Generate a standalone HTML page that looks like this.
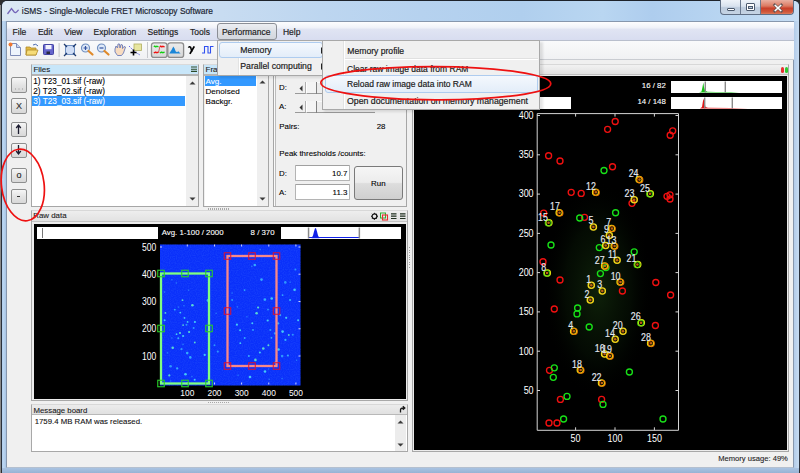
<!DOCTYPE html>
<html><head><meta charset="utf-8">
<style>
*{box-sizing:border-box}
html,body{margin:0;padding:0;width:800px;height:473px;overflow:hidden;background:#2e2e2e}
body{position:relative;font-family:"Liberation Sans",sans-serif;font-size:9px;color:#000}
.a{position:absolute}
.t{position:absolute;white-space:nowrap;line-height:1;-webkit-text-stroke:0.1px currentColor}
.m{-webkit-text-stroke:0.18px currentColor}
.btn{position:absolute;border:1px solid #8e8f8f;border-radius:2px;background:linear-gradient(#f6f6f6,#e4e4e4 50%,#d8d8d8);text-align:center;color:#333}
svg{position:absolute;overflow:visible}
</style></head><body>
<div class="a" style="left:0px;top:5px;width:1px;height:468px;background:#8a8a8a"></div>
<div class="a" style="left:1px;top:0px;width:799px;height:474px;border:1px solid #2a313c;border-top-color:#1e232b;border-radius:6px 6px 6px 6px;background:linear-gradient(180deg,rgba(255,255,255,0) 0,rgba(255,255,255,0) 100%),linear-gradient(90deg,#a9c4e4 0,#b4cdea 3px,#bcd3ee 100%)"></div>
<div class="a" style="left:2px;top:1px;width:797px;height:20px;border-radius:5px 5px 0 0;background:linear-gradient(90deg,#dce8f4 0,#d3e3f3 120px,#c8dcf1 220px,#bdd6f0 320px,#b6d2ef 420px,#b0cfee 520px,#b9d6f1 600px,#aecdee 650px,#b8d5f1 720px,#c8def4 800px)"></div>
<div class="a" style="left:2px;top:468px;width:797px;height:5px;background:linear-gradient(#a9c3e2,#98b3d4)"></div>
<div class="a" style="left:2px;top:21px;width:4px;height:447px;background:linear-gradient(90deg,#b0cdec,#bcd6f0 40%,#a8c4e4)"></div>
<div class="a" style="left:794px;top:21px;width:5px;height:447px;background:linear-gradient(90deg,#b2cbe8,#c7dcf2)"></div>
<div class="a" style="left:6px;top:21px;width:788px;height:447px;background:#f0f0f0;border:1px solid #8797ad;border-bottom-color:#b4c0d0"></div>
<svg style="left:7px;top:7px" width="12" height="8" viewBox="0 0 12 8"><path d="M0.8 6.5 L4.5 1.5 L7.2 5 Q8.8 6.8 11.3 3.2" stroke="#7565b8" stroke-width="1.3" fill="none" stroke-linecap="round"/></svg>
<div class="t m" style="top:7.09px;font-size:8.4px;color:#1b2533;left:21.80px;">iSMS - Single-Molecule FRET Microscopy Software</div>
<div class="a" style="left:720px;top:0px;width:74px;height:15px;border:1px solid #5f6e84;border-top:none;border-radius:0 0 4px 4px;overflow:hidden;background:linear-gradient(#eef3f9,#d8e2ee 45%,#bccbdd 55%,#c6d4e4)">
 <div class="a" style="left:19px;top:0;width:1px;height:15px;background:#6b7a90"></div>
 <div class="a" style="left:39px;top:0;width:1px;height:15px;background:#6b7a90"></div>
 <div class="a" style="left:40px;top:0;width:34px;height:15px;background:linear-gradient(#e9b0a2,#dc7a62 40%,#c8402a 55%,#d0583c 80%,#e08a6a)"></div>
 <div class="a" style="left:6px;top:8px;width:8px;height:3px;background:#fff;border:1px solid #4c5a6e;border-radius:1px"></div>
 <div class="a" style="left:25px;top:3px;width:9px;height:8px;background:#fff;border:1px solid #4c5a6e;border-radius:1px"></div>
 <div class="a" style="left:27px;top:6px;width:5px;height:3px;background:#bcc9da;border:1px solid #4c5a6e"></div>
 <svg style="left:52px;top:4px" width="10" height="8" viewBox="0 0 10 8"><path d="M1.8 1 L8.2 7 M8.2 1 L1.8 7" stroke="#6a5a5a" stroke-width="3" stroke-linecap="square"/><path d="M1.8 1 L8.2 7 M8.2 1 L1.8 7" stroke="#fff" stroke-width="1.7"/></svg>
</div>
<div class="a" style="left:7px;top:22px;width:787px;height:18px;background:linear-gradient(#fdfdfe 0,#f1f3f9 30%,#e0e4f3 42%,#d8ddf0 100%)"></div>
<div class="a" style="left:7px;top:40px;width:787px;height:1px;background:#b9bfcd"></div>
<div class="a" style="left:217px;top:23px;width:60px;height:17px;border:1px solid #8b8e95;border-radius:3px;background:linear-gradient(#eceef2,#dde0e6 50%,#d3d7de)"></div>
<div class="t m" style="top:27.80px;font-size:8.5px;color:#1e1e1e;left:12.60px;">File</div>
<div class="t m" style="top:27.80px;font-size:8.5px;color:#1e1e1e;left:37.90px;">Edit</div>
<div class="t m" style="top:27.80px;font-size:8.5px;color:#1e1e1e;left:64.20px;">View</div>
<div class="t m" style="top:27.80px;font-size:8.5px;color:#1e1e1e;left:93.60px;">Exploration</div>
<div class="t m" style="top:27.80px;font-size:8.5px;color:#1e1e1e;left:147.60px;">Settings</div>
<div class="t m" style="top:27.80px;font-size:8.5px;color:#1e1e1e;left:190.10px;">Tools</div>
<div class="t m" style="top:27.80px;font-size:8.5px;color:#1e1e1e;left:221.90px;">Performance</div>
<div class="t m" style="top:27.80px;font-size:8.5px;color:#1e1e1e;left:282.90px;">Help</div>
<div class="a" style="left:7px;top:41px;width:787px;height:18px;background:linear-gradient(#f9fafb,#f0f1f3)"></div>
<div class="a" style="left:7px;top:59px;width:787px;height:1px;background:#c9ccd1"></div>
<svg style="left:8px;top:42px" width="210" height="16" viewBox="0 0 210 16">
 <defs><linearGradient id="pbg" x1="0" y1="0" x2="0" y2="1"><stop offset="0" stop-color="#ececec"/><stop offset="1" stop-color="#d6d6d6"/></linearGradient></defs>
 <path d="M2.5 1.5 H8.5 L12.5 5.5 V13.5 H2.5 Z" fill="#eef4fc" stroke="#7e8cb8" stroke-width="1"/>
 <path d="M8.5 1.5 V5.5 H12.5" fill="#c8d2ee" stroke="#7e8cb8" stroke-width="1"/>
 <circle cx="2.5" cy="2.5" r="2" fill="#f07830"/>
 <path d="M18 5 H22 L23 6 H28 V13 H18 Z" fill="#e2b840" stroke="#b08a28" stroke-width="0.8"/>
 <path d="M19 8 H30 L28 13 H18 Z" fill="#f6dc78" stroke="#b08a28" stroke-width="0.8"/>
 <path d="M25 3 Q28 1 30 4" stroke="#4a6ab0" stroke-width="1" fill="none"/>
 <rect x="35.5" y="2.5" width="10" height="10" rx="0.8" fill="#6464cc" stroke="#4444a4"/>
 <rect x="37.5" y="3" width="6" height="4.2" fill="#f2f2fc"/>
 <rect x="38.5" y="9.5" width="3.5" height="2.5" fill="#2a2a40"/>
 <rect x="50.6" y="1" width="1" height="14" fill="#c0c2c6"/>
 <rect x="57.5" y="3.5" width="9" height="9" fill="#d0def6" stroke="#7090c0"/>
 <path d="M56 2 L59 5 M68 2 L65 5 M56 14 L59 11 M68 14 L65 11" stroke="#203c70" stroke-width="1.3"/>
 <circle cx="77.5" cy="6" r="4" fill="#dfeaf8" stroke="#6f8fc0" stroke-width="1.2"/>
 <path d="M75.5 6 H79.5 M77.5 4 V8" stroke="#3050a0" stroke-width="1.2"/>
 <path d="M80.5 9 L84.5 12.5" stroke="#e08a2a" stroke-width="2.2" stroke-linecap="round"/>
 <circle cx="93.5" cy="6" r="4" fill="#dfeaf8" stroke="#6f8fc0" stroke-width="1.2"/>
 <path d="M91.5 6 H95.5" stroke="#3050a0" stroke-width="1.2"/>
 <path d="M96.5 9 L100.5 12.5" stroke="#e08a2a" stroke-width="2.2" stroke-linecap="round"/>
 <path d="M107 7 L108 4 L109.5 6 L110 2 L111.5 2 L112 6 L113 2.5 L114.5 3 L114.5 6.5 L116 4.5 L117.5 5 L115.5 11 L113.5 13.5 H109.5 L107 10 Z" fill="#f8dcc0" stroke="#6a7ab8" stroke-width="0.9"/>
 <rect x="126" y="2" width="7.5" height="6.5" fill="#e8e6a0" stroke="#b0ae60" stroke-width="0.8"/>
 <path d="M121 4 L127 10 L132 13" stroke="#5a5ae0" stroke-width="0.9" stroke-dasharray="1.5 1" fill="none"/>
 <path d="M125.5 7.5 V13.5 M122.5 10.5 H128.5" stroke="#000" stroke-width="1.6"/>
 <rect x="139" y="0" width="1" height="16" fill="#c6c8cc"/>
 <rect x="143.5" y="0.8" width="15.5" height="14.6" rx="2.5" fill="url(#pbg)" stroke="#8c8c8c" stroke-width="1.3"/>
 <path d="M145.8 4.8 L146.8 4.1 L147.8 5 L148.8 4.2 L150.5 4.8" stroke="#10d010" stroke-width="1.3" fill="none"/>
 <path d="M151.8 4.8 L152.8 4.1 L153.8 5 L154.8 4.3 L156.6 4.8" stroke="#f01010" stroke-width="1.3" fill="none"/>
 <path d="M145.8 10.2 L146.8 10.8 L147.8 10 L148.8 10.7 L150.6 10.2" stroke="#f01010" stroke-width="1.3" fill="none"/>
 <path d="M151.8 10.2 L152.8 10.8 L153.8 10 L154.8 10.7 L156.6 10.2" stroke="#10d010" stroke-width="1.3" fill="none"/>
 <path d="M150.6 10.2 L151.8 4.8" stroke="#d02020" stroke-width="0.7" fill="none"/>
 <rect x="159.8" y="0.8" width="15.8" height="14.6" rx="2.5" fill="url(#pbg)" stroke="#8c8c8c" stroke-width="1.3"/>
 <path d="M161.2 11.6 L163.5 8 L165.3 4.6 L166.6 6.5 L167.6 9.3 L169 10.2 L170.3 9.2 L171.5 10.6 L172.6 11.6 Z" fill="#1a86d8"/>
 <path d="M180.4 5.6 Q181.4 3.9 182.6 5.2 L183.9 9.6" stroke="#000" stroke-width="1.5" fill="none"/>
 <path d="M186.3 4.4 L181.9 11.9" stroke="#000" stroke-width="1.8" fill="none"/>
 <path d="M194 11 H196.5 V4.5 H200 V11 H202.5 V4.5 H205.5" stroke="#3050f0" stroke-width="1.1" fill="none"/>
</svg>
<div class="btn" style="left:11px;top:77px;width:16px;height:16px"></div>
<svg style="left:14px;top:88px" width="10" height="2"><path d="M1 1 H2 M4.5 1 H5.5 M8 1 H9" stroke="#999" stroke-width="1"/></svg>
<div class="btn" style="left:11px;top:98px;width:16px;height:16px"></div>
<div class="t" style="top:102.38px;font-size:9px;color:#333;left:-131.00px;width:300px;text-align:center;">X</div>
<div class="btn" style="left:11px;top:122px;width:16px;height:15px"></div>
<svg style="left:15px;top:124px" width="7" height="10"><path d="M3.5 1.5 V10 M1.2 4 L3.5 1 L5.8 4" stroke="#1c1c30" stroke-width="1.3" fill="none"/></svg>
<div class="btn" style="left:11px;top:143px;width:16px;height:15px"></div>
<svg style="left:15px;top:145px" width="7" height="10"><path d="M3.5 0 V8.5 M1.2 6 L3.5 9 L5.8 6" stroke="#1c1c30" stroke-width="1.3" fill="none"/></svg>
<div class="btn" style="left:11px;top:168px;width:16px;height:15px"></div>
<div class="t" style="top:170.88px;font-size:9px;color:#222;left:-131.00px;width:300px;text-align:center;">o</div>
<div class="btn" style="left:11px;top:189px;width:16px;height:15px"></div>
<div class="a" style="left:17px;top:196px;width:3px;height:1px;background:#333"></div>
<div class="a" style="left:31px;top:64px;width:167.5px;height:142.5px;border:1px solid #a6a6a6;border-top-color:#dadada;border-bottom-width:1.5px;border-right-width:1.3px;background:#f0f0f0"></div>
<div class="a" style="left:32px;top:65px;width:166px;height:9px;background:#c8e6f9"></div>
<div class="a" style="left:32px;top:74px;width:166px;height:2px;background:#b4b4b4"></div>
<div class="t" style="top:65.63px;font-size:8px;color:#1a1a1a;left:33.40px;">Files</div>
<svg style="left:191px;top:66px" width="6" height="7"><path d="M0 1 H6 M0 3.2 H6 M0 5.4 H6" stroke="#2a4a2a" stroke-width="1.1"/></svg>
<div class="a" style="left:32px;top:76px;width:154px;height:130px;background:#fff"></div>
<div class="a" style="left:186px;top:76px;width:12px;height:130px;background:#efefef"></div>
<svg style="left:188.5px;top:80.5px" width="7" height="4"><path d="M0.5 3.5 L3.5 0.5 L6.5 3.5 Z" fill="#3a3a3a"/></svg>
<svg style="left:188.5px;top:197px" width="7" height="4"><path d="M0.5 0.5 L3.5 3.5 L6.5 0.5 Z" fill="#3a3a3a"/></svg>
<div class="a" style="left:32px;top:96px;width:153px;height:10px;background:#3399ff"></div>
<div class="t" style="top:78.32px;font-size:8.25px;left:33.25px;">1) T23_01.sif (-raw)</div>
<div class="t" style="top:88.32px;font-size:8.25px;left:33.25px;">2) T23_02.sif (-raw)</div>
<div class="t" style="top:98.22px;font-size:8.25px;color:#fff;left:33.25px;">3) T23_03.sif (-raw)</div>
<div class="a" style="left:203px;top:64px;width:66px;height:142.5px;border:1px solid #a6a6a6;border-top-color:#dadada;border-bottom-width:1.5px;background:#f0f0f0"></div>
<div class="a" style="left:204px;top:65px;width:64px;height:9px;background:#c8e6f9"></div>
<div class="a" style="left:204px;top:74px;width:64px;height:2px;background:#b4b4b4"></div>
<div class="t" style="top:65.63px;font-size:8px;color:#1a1a1a;left:205.50px;">Frames</div>
<div class="a" style="left:205px;top:76px;width:52px;height:130px;background:#fff"></div>
<div class="a" style="left:256.5px;top:76px;width:11.5px;height:129px;background:#efefef"></div>
<svg style="left:259px;top:80px" width="7" height="4"><path d="M0.5 3.5 L3.5 0.5 L6.5 3.5 Z" fill="#3a3a3a"/></svg>
<svg style="left:259px;top:197px" width="7" height="4"><path d="M0.5 0.5 L3.5 3.5 L6.5 0.5 Z" fill="#3a3a3a"/></svg>
<div class="a" style="left:205px;top:76px;width:51px;height:10px;background:#3399ff"></div>
<div class="t" style="top:78.34px;font-size:8.1px;color:#fff;left:205.50px;">Avg.</div>
<div class="t" style="top:88.44px;font-size:8.1px;left:205.50px;">Denoised</div>
<div class="t" style="top:98.44px;font-size:8.1px;left:205.50px;">Backgr.</div>
<div class="a" style="left:208px;top:208px;width:22px;height:2px;background:repeating-linear-gradient(90deg,#a8a8a8 0 1px,transparent 1px 2px)"></div>
<div class="a" style="left:273.3px;top:64px;width:133.7px;height:142.5px;border:1px solid #a6a6a6;border-top-color:#dadada;border-bottom-width:1.5px;background:#f0f0f0;box-shadow:inset 1px 0 0 #fafafa, inset 2px 0 0 #bdbdbd"></div>
<div class="a" style="left:275px;top:65px;width:131px;height:9px;background:#c8e6f9"></div>
<div class="t" style="top:83.71px;font-size:7.9px;left:279.10px;">D:</div>
<div class="t" style="top:102.81px;font-size:7.9px;left:279.10px;">A:</div>
<div class="a" style="left:295px;top:82px;width:80px;height:12px;background:#ececec;border-bottom:1px solid #9a9a9a;border-top:1px solid #fafafa"></div>
<div class="a" style="left:295px;top:82px;width:11px;height:12px;background:#f0f0f0;border-right:1px solid #b0b0b0;border-bottom:1px solid #9a9a9a"></div>
<svg style="left:299px;top:85px" width="4" height="7"><path d="M3.5 0.5 L0.5 3.5 L3.5 6.5 Z" fill="#333"/></svg>
<div class="a" style="left:306px;top:82px;width:11px;height:12px;background:#f4f4f4;border-left:1px solid #fff;border-right:1px solid #808080;border-bottom:1px solid #9a9a9a"></div>
<div class="a" style="left:316px;top:82px;width:1px;height:12px;background:#808080"></div>
<div class="a" style="left:295px;top:101px;width:80px;height:12px;background:#ececec;border-bottom:1px solid #9a9a9a;border-top:1px solid #fafafa"></div>
<div class="a" style="left:295px;top:101px;width:11px;height:12px;background:#f0f0f0;border-right:1px solid #b0b0b0;border-bottom:1px solid #9a9a9a"></div>
<svg style="left:299px;top:104px" width="4" height="7"><path d="M3.5 0.5 L0.5 3.5 L3.5 6.5 Z" fill="#333"/></svg>
<div class="a" style="left:306px;top:101px;width:11px;height:12px;background:#f4f4f4;border-left:1px solid #fff;border-right:1px solid #808080;border-bottom:1px solid #9a9a9a"></div>
<div class="a" style="left:316px;top:101px;width:1px;height:12px;background:#808080"></div>
<div class="t" style="top:122.56px;font-size:7.9px;left:279.25px;">Pairs:</div>
<div class="t" style="top:122.56px;font-size:7.9px;left:85.50px;width:300px;text-align:right;">28</div>
<div class="t" style="top:149.56px;font-size:7.9px;left:279.25px;">Peak thresholds /counts:</div>
<div class="t" style="top:169.56px;font-size:7.9px;left:279.10px;">D:</div>
<div class="t" style="top:188.71px;font-size:7.9px;left:279.10px;">A:</div>
<div class="a" style="left:295px;top:165px;width:55px;height:16px;background:#fff;border:1px solid #b4b4b4;border-top-color:#a0a0a0;border-radius:1px"></div>
<div class="a" style="left:295px;top:184px;width:55px;height:16px;background:#fff;border:1px solid #b4b4b4;border-top-color:#a0a0a0;border-radius:1px"></div>
<div class="t" style="top:169.56px;font-size:7.9px;left:47.40px;width:300px;text-align:right;">10.7</div>
<div class="t" style="top:188.71px;font-size:7.9px;left:47.40px;width:300px;text-align:right;">11.3</div>
<div class="a" style="left:354px;top:166px;width:49px;height:34px;border:1px solid #7a7a7a;border-radius:3px;background:linear-gradient(#f6f6f6 0,#ececec 48%,#dddddd 52%,#cfcfcf)"></div>
<div class="t" style="top:180.31px;font-size:7.9px;left:228.30px;width:300px;text-align:center;">Run</div>
<div class="a" style="left:31px;top:210px;width:377px;height:191px;border:1px solid #a8a8a8;border-top-color:#d8d8d8;background:#ececec"></div>
<div class="a" style="left:32px;top:211px;width:375px;height:10px;background:linear-gradient(#eeeeee,#e2e2e2)"></div>
<div class="a" style="left:32px;top:221px;width:375px;height:1px;background:#c2c2c2"></div>
<div class="t" style="top:211.91px;font-size:7.9px;color:#1a1a1a;left:33.25px;">Raw data</div>
<svg style="left:370px;top:212px" width="37" height="9" viewBox="0 0 37 9">
 <circle cx="4.5" cy="4.3" r="2.4" fill="none" stroke="#111" stroke-width="1.2"/><path d="M4.5 0.8 V1.9 M4.5 6.7 V7.8 M1 4.3 H2.1 M6.9 4.3 H8 M2 1.8 L2.8 2.6 M7 1.8 L6.2 2.6 M2 6.8 L2.8 6 M7 6.8 L6.2 6" stroke="#111" stroke-width="0.9"/>
 <rect x="10.5" y="1" width="5" height="5" fill="none" stroke="#30b030" stroke-width="1"/>
 <rect x="12.5" y="3" width="5" height="5" fill="none" stroke="#e83030" stroke-width="1.1"/>
 <path d="M21 1.9 H26.5 M21 4.2 H26.5 M21 6.5 H26.5" stroke="#1e2e1e" stroke-width="1.2"/>
 <path d="M30 1.9 H35.5 M30 4.2 H35.5 M30 6.5 H35.5" stroke="#1e2e1e" stroke-width="1.2"/>
</svg>
<div class="a" style="left:34px;top:224px;width:372px;height:175px;background:#000"></div>
<div class="a" style="left:37px;top:227px;width:121px;height:12px;background:#fff"></div>
<div class="a" style="left:42px;top:228px;width:1px;height:10px;background:#777"></div>
<div class="t" style="top:228.75px;font-size:7.85px;color:#fff;left:161.75px;">Avg. 1-100 / 2000</div>
<div class="t" style="top:228.75px;font-size:7.85px;color:#fff;left:-25.40px;width:300px;text-align:right;">8 / 370</div>
<svg style="left:281px;top:227px" width="120" height="12" viewBox="0 0 120 12">
 <rect x="0" y="0" width="120" height="12" fill="#fff"/>
 <path d="M28 10.5 H78" stroke="#1020e8" stroke-width="1.2"/>
 <path d="M30.5 11.2 L32 8.5 L33 4.5 L34 1.2 L35 1.2 L36 4.5 L37 8.5 L38.5 11.2 Z" fill="#1020e8"/>
 <rect x="26.8" y="0.5" width="1.5" height="11" fill="#8a8a8a"/>
 <rect x="77.6" y="0.5" width="1.5" height="11" fill="#8a8a8a"/>
</svg>
<svg style="left:0;top:0" width="800" height="473" viewBox="0 0 800 473"><defs><filter id="nz" x="0" y="0" width="100%" height="100%"><feTurbulence type="fractalNoise" baseFrequency="0.85" numOctaves="1" seed="3"/><feColorMatrix values="0 0 0 0 0.1  0 0 0 0 0.3  0 0 0 0 1  0 0 0 1.2 -0.45"/></filter><filter id="bl" x="-100%" y="-100%" width="300%" height="300%"><feGaussianBlur stdDeviation="0.7"/></filter></defs>
<rect x="160" y="244.5" width="140.5" height="141" fill="#0a30fa"/>
<rect x="160" y="244.5" width="140.5" height="141" filter="url(#nz)" opacity="0.3"/>
<circle cx="174.8" cy="309.7" r="0.9" fill="#38b8ff" filter="url(#bl)" opacity="0.9"/>
<circle cx="180.3" cy="312.6" r="0.9" fill="#48d8f8" filter="url(#bl)" opacity="0.9"/>
<circle cx="184.5" cy="317.9" r="0.9" fill="#48d8f8" filter="url(#bl)" opacity="0.9"/>
<circle cx="187.6" cy="321.9" r="0.9" fill="#48d8f8" filter="url(#bl)" opacity="0.9"/>
<circle cx="183.1" cy="325.1" r="0.9" fill="#60e8d0" filter="url(#bl)" opacity="0.9"/>
<circle cx="186.5" cy="324.7" r="1.0" fill="#30a0ff" filter="url(#bl)" opacity="0.9"/>
<circle cx="194.9" cy="322.0" r="1.1" fill="#48d8f8" filter="url(#bl)" opacity="0.9"/>
<circle cx="193.6" cy="328.1" r="1.0" fill="#30a0ff" filter="url(#bl)" opacity="0.9"/>
<circle cx="176.6" cy="334.2" r="0.9" fill="#48d8f8" filter="url(#bl)" opacity="0.9"/>
<circle cx="180.0" cy="333.0" r="1.1" fill="#60e8d0" filter="url(#bl)" opacity="0.9"/>
<circle cx="183.1" cy="336.0" r="1.1" fill="#48d8f8" filter="url(#bl)" opacity="0.9"/>
<circle cx="178.3" cy="338.2" r="1.0" fill="#38b8ff" filter="url(#bl)" opacity="0.9"/>
<circle cx="189.1" cy="332.0" r="1.1" fill="#60e8d0" filter="url(#bl)" opacity="0.9"/>
<circle cx="194.8" cy="342.5" r="0.9" fill="#60e8d0" filter="url(#bl)" opacity="0.9"/>
<circle cx="172.7" cy="347.8" r="1.3" fill="#60e8d0" filter="url(#bl)" opacity="0.9"/>
<circle cx="181.5" cy="349.2" r="1.1" fill="#30a0ff" filter="url(#bl)" opacity="0.9"/>
<circle cx="187.2" cy="353.1" r="1.3" fill="#38b8ff" filter="url(#bl)" opacity="0.9"/>
<circle cx="190.3" cy="357.4" r="1.3" fill="#38b8ff" filter="url(#bl)" opacity="0.9"/>
<circle cx="170.6" cy="366.2" r="1.3" fill="#30a0ff" filter="url(#bl)" opacity="0.9"/>
<circle cx="177.2" cy="368.4" r="1.1" fill="#38b8ff" filter="url(#bl)" opacity="0.9"/>
<circle cx="165.4" cy="312.9" r="0.9" fill="#60e8d0" filter="url(#bl)" opacity="0.9"/>
<circle cx="164.6" cy="320.3" r="1.0" fill="#48d8f8" filter="url(#bl)" opacity="0.9"/>
<circle cx="207.9" cy="300.4" r="1.3" fill="#38b8ff" filter="url(#bl)" opacity="0.9"/>
<circle cx="204.7" cy="354.9" r="1.1" fill="#48d8f8" filter="url(#bl)" opacity="0.9"/>
<circle cx="169.3" cy="375.4" r="1.1" fill="#60e8d0" filter="url(#bl)" opacity="0.9"/>
<circle cx="185.5" cy="374.2" r="1.3" fill="#48d8f8" filter="url(#bl)" opacity="0.9"/>
<circle cx="194.7" cy="379.7" r="1.0" fill="#48d8f8" filter="url(#bl)" opacity="0.9"/>
<circle cx="214.5" cy="345.3" r="1.0" fill="#30a0ff" filter="url(#bl)" opacity="0.9"/>
<circle cx="217.8" cy="351.6" r="1.1" fill="#30a0ff" filter="url(#bl)" opacity="0.9"/>
<circle cx="182.5" cy="300.2" r="0.9" fill="#60e8d0" filter="url(#bl)" opacity="0.9"/>
<circle cx="192.4" cy="305.3" r="1.3" fill="#60e8d0" filter="url(#bl)" opacity="0.9"/>
<circle cx="264.9" cy="299.6" r="1.3" fill="#38b8ff" filter="url(#bl)" opacity="0.9"/>
<circle cx="271.7" cy="298.5" r="1.3" fill="#48d8f8" filter="url(#bl)" opacity="0.9"/>
<circle cx="282.6" cy="295.1" r="0.9" fill="#38b8ff" filter="url(#bl)" opacity="0.9"/>
<circle cx="290.1" cy="300.0" r="1.1" fill="#38b8ff" filter="url(#bl)" opacity="0.9"/>
<circle cx="294.6" cy="289.7" r="1.3" fill="#48d8f8" filter="url(#bl)" opacity="0.9"/>
<circle cx="258.1" cy="307.5" r="1.1" fill="#60e8d0" filter="url(#bl)" opacity="0.9"/>
<circle cx="256.6" cy="313.3" r="1.3" fill="#60e8d0" filter="url(#bl)" opacity="0.9"/>
<circle cx="268.0" cy="309.6" r="0.9" fill="#30a0ff" filter="url(#bl)" opacity="0.9"/>
<circle cx="280.2" cy="315.0" r="1.0" fill="#38b8ff" filter="url(#bl)" opacity="0.9"/>
<circle cx="267.7" cy="320.5" r="1.1" fill="#48d8f8" filter="url(#bl)" opacity="0.9"/>
<circle cx="278.2" cy="323.4" r="1.1" fill="#38b8ff" filter="url(#bl)" opacity="0.9"/>
<circle cx="286.2" cy="317.8" r="1.1" fill="#48d8f8" filter="url(#bl)" opacity="0.9"/>
<circle cx="236.9" cy="324.7" r="1.1" fill="#48d8f8" filter="url(#bl)" opacity="0.9"/>
<circle cx="240.1" cy="330.3" r="1.0" fill="#48d8f8" filter="url(#bl)" opacity="0.9"/>
<circle cx="252.3" cy="323.2" r="1.0" fill="#48d8f8" filter="url(#bl)" opacity="0.9"/>
<circle cx="253.0" cy="329.9" r="0.9" fill="#38b8ff" filter="url(#bl)" opacity="0.9"/>
<circle cx="270.3" cy="330.0" r="1.0" fill="#30a0ff" filter="url(#bl)" opacity="0.9"/>
<circle cx="274.9" cy="333.4" r="1.1" fill="#30a0ff" filter="url(#bl)" opacity="0.9"/>
<circle cx="282.6" cy="331.6" r="1.3" fill="#48d8f8" filter="url(#bl)" opacity="0.9"/>
<circle cx="288.8" cy="335.0" r="0.9" fill="#60e8d0" filter="url(#bl)" opacity="0.9"/>
<circle cx="271.4" cy="337.8" r="0.9" fill="#38b8ff" filter="url(#bl)" opacity="0.9"/>
<circle cx="268.4" cy="345.3" r="1.0" fill="#60e8d0" filter="url(#bl)" opacity="0.9"/>
<circle cx="285.4" cy="339.9" r="1.1" fill="#38b8ff" filter="url(#bl)" opacity="0.9"/>
<circle cx="263.3" cy="348.5" r="1.3" fill="#60e8d0" filter="url(#bl)" opacity="0.9"/>
<circle cx="259.9" cy="352.4" r="1.0" fill="#48d8f8" filter="url(#bl)" opacity="0.9"/>
<circle cx="278.5" cy="349.5" r="1.3" fill="#48d8f8" filter="url(#bl)" opacity="0.9"/>
<circle cx="282.1" cy="356.1" r="1.3" fill="#30a0ff" filter="url(#bl)" opacity="0.9"/>
<circle cx="244.7" cy="338.0" r="0.9" fill="#38b8ff" filter="url(#bl)" opacity="0.9"/>
<circle cx="240.3" cy="343.2" r="0.9" fill="#48d8f8" filter="url(#bl)" opacity="0.9"/>
<circle cx="287.9" cy="355.4" r="1.0" fill="#38b8ff" filter="url(#bl)" opacity="0.9"/>
<circle cx="292.8" cy="334.8" r="1.0" fill="#30a0ff" filter="url(#bl)" opacity="0.9"/>
<circle cx="248.8" cy="355.9" r="1.0" fill="#38b8ff" filter="url(#bl)" opacity="0.9"/>
<circle cx="255.4" cy="359.9" r="1.3" fill="#60e8d0" filter="url(#bl)" opacity="0.9"/>
<circle cx="275.3" cy="362.4" r="1.0" fill="#48d8f8" filter="url(#bl)" opacity="0.9"/>
<circle cx="265.0" cy="371.5" r="1.3" fill="#48d8f8" filter="url(#bl)" opacity="0.9"/>
<circle cx="298.1" cy="320.3" r="1.0" fill="#48d8f8" filter="url(#bl)" opacity="0.9"/>
<circle cx="244.6" cy="290.1" r="0.9" fill="#38b8ff" filter="url(#bl)" opacity="0.9"/>
<circle cx="254.8" cy="265.0" r="1.3" fill="#38b8ff" filter="url(#bl)" opacity="0.9"/>
<circle cx="295.4" cy="269.6" r="1.0" fill="#30a0ff" filter="url(#bl)" opacity="0.9"/>
<circle cx="261.5" cy="279.6" r="1.3" fill="#38b8ff" filter="url(#bl)" opacity="0.9"/>
<circle cx="285.3" cy="282.4" r="1.3" fill="#30a0ff" filter="url(#bl)" opacity="0.9"/>
<circle cx="232.1" cy="300.0" r="1.0" fill="#30a0ff" filter="url(#bl)" opacity="0.9"/>
<circle cx="250.0" cy="377.0" r="1.3" fill="#48d8f8" filter="url(#bl)" opacity="0.9"/>
<circle cx="257.1" cy="366.2" r="0.8" fill="#3090ff" filter="url(#bl)" opacity="0.7"/>
<circle cx="290.1" cy="282.3" r="0.8" fill="#3090ff" filter="url(#bl)" opacity="0.7"/>
<circle cx="238.1" cy="375.3" r="0.8" fill="#3090ff" filter="url(#bl)" opacity="0.7"/>
<circle cx="276.2" cy="265.7" r="0.8" fill="#3090ff" filter="url(#bl)" opacity="0.7"/>
<circle cx="178.5" cy="307.1" r="0.8" fill="#3090ff" filter="url(#bl)" opacity="0.7"/>
<circle cx="171.9" cy="279.7" r="0.8" fill="#3090ff" filter="url(#bl)" opacity="0.7"/>
<circle cx="171.9" cy="338.0" r="0.8" fill="#3090ff" filter="url(#bl)" opacity="0.7"/>
<circle cx="268.6" cy="369.0" r="0.8" fill="#3090ff" filter="url(#bl)" opacity="0.7"/>
<circle cx="183.0" cy="344.4" r="0.8" fill="#3090ff" filter="url(#bl)" opacity="0.7"/>
<circle cx="251.8" cy="266.4" r="0.8" fill="#3090ff" filter="url(#bl)" opacity="0.7"/>
<circle cx="282.1" cy="378.6" r="0.8" fill="#3090ff" filter="url(#bl)" opacity="0.7"/>
<circle cx="191.9" cy="376.5" r="0.8" fill="#3090ff" filter="url(#bl)" opacity="0.7"/>
<circle cx="216.2" cy="313.3" r="0.8" fill="#3090ff" filter="url(#bl)" opacity="0.7"/>
<circle cx="296.6" cy="360.2" r="0.8" fill="#3090ff" filter="url(#bl)" opacity="0.7"/>
<circle cx="184.0" cy="305.7" r="0.8" fill="#3090ff" filter="url(#bl)" opacity="0.7"/>
<circle cx="232.1" cy="293.1" r="0.8" fill="#3090ff" filter="url(#bl)" opacity="0.7"/>
<circle cx="188.6" cy="290.3" r="0.8" fill="#3090ff" filter="url(#bl)" opacity="0.7"/>
<circle cx="260.2" cy="249.6" r="0.8" fill="#3090ff" filter="url(#bl)" opacity="0.7"/>
<circle cx="237.4" cy="306.9" r="0.8" fill="#3090ff" filter="url(#bl)" opacity="0.7"/>
<circle cx="164.5" cy="292.1" r="0.8" fill="#3090ff" filter="url(#bl)" opacity="0.7"/>
<circle cx="246.9" cy="316.7" r="0.8" fill="#3090ff" filter="url(#bl)" opacity="0.7"/>
<circle cx="170.7" cy="381.0" r="0.8" fill="#3090ff" filter="url(#bl)" opacity="0.7"/>
<circle cx="269.2" cy="379.2" r="0.8" fill="#3090ff" filter="url(#bl)" opacity="0.7"/>
<circle cx="176.3" cy="283.1" r="0.8" fill="#3090ff" filter="url(#bl)" opacity="0.7"/>
<circle cx="167.4" cy="352.9" r="0.8" fill="#3090ff" filter="url(#bl)" opacity="0.7"/>
<path d="M187.3 384.5 v-2 M187.3 244.5 v2 M160 356.0 h2 M300.5 356.0 h-2" stroke="#fff" stroke-width="0.8"/>
<text transform="translate(156.20 359.70) scale(0.84 1)" text-anchor="end" font-family="Liberation Sans" font-size="10.2" fill="#fff">100</text>
<text transform="translate(187.35 396.10) scale(0.85 1)" text-anchor="middle" font-family="Liberation Sans" font-size="9.9" fill="#fff">100</text>
<path d="M214.5 384.5 v-2 M214.5 244.5 v2 M160 328.8 h2 M300.5 328.8 h-2" stroke="#fff" stroke-width="0.8"/>
<text transform="translate(156.20 332.45) scale(0.84 1)" text-anchor="end" font-family="Liberation Sans" font-size="10.2" fill="#fff">200</text>
<text transform="translate(214.50 396.10) scale(0.85 1)" text-anchor="middle" font-family="Liberation Sans" font-size="9.9" fill="#fff">200</text>
<path d="M241.6 384.5 v-2 M241.6 244.5 v2 M160 301.5 h2 M300.5 301.5 h-2" stroke="#fff" stroke-width="0.8"/>
<text transform="translate(156.20 305.20) scale(0.84 1)" text-anchor="end" font-family="Liberation Sans" font-size="10.2" fill="#fff">300</text>
<text transform="translate(241.65 396.10) scale(0.85 1)" text-anchor="middle" font-family="Liberation Sans" font-size="9.9" fill="#fff">300</text>
<path d="M268.8 384.5 v-2 M268.8 244.5 v2 M160 274.2 h2 M300.5 274.2 h-2" stroke="#fff" stroke-width="0.8"/>
<text transform="translate(156.20 277.95) scale(0.84 1)" text-anchor="end" font-family="Liberation Sans" font-size="10.2" fill="#fff">400</text>
<text transform="translate(268.80 396.10) scale(0.85 1)" text-anchor="middle" font-family="Liberation Sans" font-size="9.9" fill="#fff">400</text>
<path d="M295.9 384.5 v-2 M295.9 244.5 v2 M160 247.0 h2 M300.5 247.0 h-2" stroke="#fff" stroke-width="0.8"/>
<text transform="translate(156.20 250.70) scale(0.84 1)" text-anchor="end" font-family="Liberation Sans" font-size="10.2" fill="#fff">500</text>
<text transform="translate(295.95 396.10) scale(0.85 1)" text-anchor="middle" font-family="Liberation Sans" font-size="9.9" fill="#fff">500</text>
<rect x="161" y="273.5" width="48" height="110" fill="none" stroke="#80ff80" stroke-width="2.3"/>
<rect x="227.5" y="256" width="49" height="110" fill="none" stroke="#f88888" stroke-width="2.3"/>
<rect x="157.75" y="270.25" width="6.5" height="6.5" fill="none" stroke="#28d028" stroke-width="1.1"/>
<rect x="181.75" y="270.25" width="6.5" height="6.5" fill="none" stroke="#28d028" stroke-width="1.1"/>
<rect x="205.75" y="270.25" width="6.5" height="6.5" fill="none" stroke="#28d028" stroke-width="1.1"/>
<rect x="157.75" y="325.25" width="6.5" height="6.5" fill="none" stroke="#28d028" stroke-width="1.1"/>
<rect x="205.75" y="325.25" width="6.5" height="6.5" fill="none" stroke="#28d028" stroke-width="1.1"/>
<rect x="157.75" y="380.25" width="6.5" height="6.5" fill="none" stroke="#28d028" stroke-width="1.1"/>
<rect x="181.75" y="380.25" width="6.5" height="6.5" fill="none" stroke="#28d028" stroke-width="1.1"/>
<rect x="205.75" y="380.25" width="6.5" height="6.5" fill="none" stroke="#28d028" stroke-width="1.1"/>
<rect x="224.25" y="252.75" width="6.5" height="6.5" fill="none" stroke="#e01030" stroke-width="1"/>
<rect x="248.75" y="252.75" width="6.5" height="6.5" fill="none" stroke="#e01030" stroke-width="1"/>
<rect x="273.25" y="252.75" width="6.5" height="6.5" fill="none" stroke="#e01030" stroke-width="1"/>
<rect x="224.25" y="307.75" width="6.5" height="6.5" fill="none" stroke="#e01030" stroke-width="1"/>
<rect x="273.25" y="307.75" width="6.5" height="6.5" fill="none" stroke="#e01030" stroke-width="1"/>
<rect x="224.25" y="362.75" width="6.5" height="6.5" fill="none" stroke="#e01030" stroke-width="1"/>
<rect x="248.75" y="362.75" width="6.5" height="6.5" fill="none" stroke="#e01030" stroke-width="1"/>
<rect x="273.25" y="362.75" width="6.5" height="6.5" fill="none" stroke="#e01030" stroke-width="1"/></svg>
<div class="a" style="left:31px;top:404px;width:377px;height:48px;border:1px solid #a8a8a8;border-top-color:#d8d8d8;background:#fff"></div>
<div class="a" style="left:32px;top:405px;width:375px;height:9px;background:linear-gradient(#ececec,#e0e0e0)"></div>
<div class="a" style="left:32px;top:414px;width:375px;height:1px;background:#b8b8b8"></div>
<div class="t" style="top:406.60px;font-size:7.8px;color:#1a1a1a;left:33.50px;">Message board</div>
<svg style="left:399px;top:406px" width="7" height="7"><path d="M1.5 6.5 V4 Q1.5 2 4 2 H5.5 M3.8 0.3 L5.8 2 L3.8 3.7" stroke="#1a1a1a" stroke-width="1.3" fill="none"/></svg>
<div class="t" style="top:418.10px;font-size:7.8px;color:#111;left:34.70px;">1759.4 MB RAM was released.</div>
<div class="a" style="left:395px;top:415px;width:11px;height:36px;background:#ececec"></div>
<svg style="left:397px;top:420px" width="7" height="4"><path d="M0.5 3.5 L3.5 0.5 L6.5 3.5 Z" fill="#3a3a3a"/></svg>
<svg style="left:397px;top:443px" width="7" height="4"><path d="M0.5 0.5 L3.5 3.5 L6.5 0.5 Z" fill="#3a3a3a"/></svg>
<div class="a" style="left:208px;top:402px;width:22px;height:1px;background:repeating-linear-gradient(90deg,#a8a8a8 0 1px,transparent 1px 2px)"></div>
<div class="a" style="left:409px;top:247px;width:1px;height:22px;background:repeating-linear-gradient(180deg,#a0a0a0 0 1px,transparent 1px 2.5px)"></div>
<div class="a" style="left:412px;top:64px;width:377px;height:388px;border:1px solid #a8a8a8;border-top-color:#d8d8d8;background:#ececec"></div>
<div class="a" style="left:413px;top:65px;width:375px;height:9px;background:linear-gradient(#f2f2f2,#e2e2e2)"></div>
<div class="a" style="left:413px;top:74px;width:375px;height:1px;background:#c0c0c0"></div>
<div class="a" style="left:781px;top:67px;width:3px;height:6px;background:#e83030;border-radius:1.5px"></div>
<div class="a" style="left:784.5px;top:67px;width:3px;height:6px;background:#30c830;border-radius:1.5px"></div>
<div class="a" style="left:414px;top:76px;width:373px;height:374px;background:#000"></div>
<div class="t" style="top:81.55px;font-size:7.85px;color:#fff;left:365.80px;width:300px;text-align:right;">16 / 82</div>
<div class="t" style="top:97.55px;font-size:7.85px;color:#fff;left:365.80px;width:300px;text-align:right;">14 / 148</div>
<div class="a" style="left:540px;top:97px;width:31px;height:12px;background:#fff"></div>
<svg style="left:671px;top:81px" width="111" height="28" viewBox="0 0 111 28">
 <rect x="0" y="0" width="111" height="12" fill="#fff"/>
 <rect x="0" y="16" width="111" height="12" fill="#fff"/>
 <path d="M28 11.5 L30.5 10.5 L31.5 6 L32.3 1.5 L33 6 L34 9.5 L36.5 10.8 L45 11 L60 11 L68 11.5 Z" fill="#18c018"/>
 <rect x="33.6" y="0.5" width="1.4" height="11" fill="#8a8a8a"/>
 <rect x="53.6" y="0.5" width="1.4" height="11" fill="#8a8a8a"/>
 <path d="M29 27.5 L31 26 L31.8 21 L32.5 17.5 L33.3 21 L34.5 26 L37 26.8 L60 27 L77 27.5 Z" fill="#e01818"/>
 <rect x="33" y="16.5" width="1.4" height="11" fill="#8a8a8a"/>
 <rect x="60.6" y="16.5" width="1.4" height="11" fill="#8a8a8a"/>
</svg>
<svg style="left:0;top:0" width="800" height="473" viewBox="0 0 800 473"><defs><radialGradient id="glow" cx="0.5" cy="0.5" r="0.5"><stop offset="0" stop-color="#122a0c" stop-opacity="0.8"/><stop offset="0.6" stop-color="#081606" stop-opacity="0.5"/><stop offset="1" stop-color="#000" stop-opacity="0"/></radialGradient></defs>
<ellipse cx="598" cy="290" rx="55" ry="110" fill="url(#glow)"/>
<circle cx="615.2" cy="121.5" r="3" fill="none" stroke="#f01010" stroke-width="1.35"/>
<circle cx="607.6" cy="129.3" r="3" fill="none" stroke="#f01010" stroke-width="1.35"/>
<circle cx="672.7" cy="130.8" r="3" fill="none" stroke="#f01010" stroke-width="1.35"/>
<circle cx="670.2" cy="135.2" r="3" fill="none" stroke="#f01010" stroke-width="1.35"/>
<circle cx="548.6" cy="155.7" r="3" fill="none" stroke="#f01010" stroke-width="1.35"/>
<circle cx="560" cy="161" r="3" fill="none" stroke="#f01010" stroke-width="1.35"/>
<circle cx="612.5" cy="166.7" r="3" fill="none" stroke="#f01010" stroke-width="1.35"/>
<circle cx="571.2" cy="192.3" r="3" fill="none" stroke="#f01010" stroke-width="1.35"/>
<circle cx="581.2" cy="193.4" r="3" fill="none" stroke="#f01010" stroke-width="1.35"/>
<circle cx="632" cy="203.3" r="3" fill="none" stroke="#f01010" stroke-width="1.35"/>
<circle cx="667" cy="196.3" r="3" fill="none" stroke="#f01010" stroke-width="1.35"/>
<circle cx="670" cy="194.8" r="3" fill="none" stroke="#f01010" stroke-width="1.35"/>
<circle cx="670" cy="199" r="3" fill="none" stroke="#f01010" stroke-width="1.35"/>
<circle cx="543.7" cy="213.1" r="3" fill="none" stroke="#f01010" stroke-width="1.35"/>
<circle cx="584.5" cy="217.3" r="3" fill="none" stroke="#f01010" stroke-width="1.35"/>
<circle cx="543" cy="261.7" r="3" fill="none" stroke="#f01010" stroke-width="1.35"/>
<circle cx="560" cy="280" r="3" fill="none" stroke="#f01010" stroke-width="1.35"/>
<circle cx="655.8" cy="282.5" r="3" fill="none" stroke="#f01010" stroke-width="1.35"/>
<circle cx="622.4" cy="291" r="3" fill="none" stroke="#f01010" stroke-width="1.35"/>
<circle cx="670.6" cy="295" r="3" fill="none" stroke="#f01010" stroke-width="1.35"/>
<circle cx="554.3" cy="309" r="3" fill="none" stroke="#f01010" stroke-width="1.35"/>
<circle cx="655.4" cy="325.5" r="3" fill="none" stroke="#f01010" stroke-width="1.35"/>
<circle cx="549.5" cy="370.3" r="3" fill="none" stroke="#f01010" stroke-width="1.35"/>
<circle cx="560.4" cy="399.4" r="3" fill="none" stroke="#f01010" stroke-width="1.35"/>
<circle cx="601.6" cy="399.4" r="3" fill="none" stroke="#f01010" stroke-width="1.35"/>
<circle cx="549" cy="423" r="3" fill="none" stroke="#f01010" stroke-width="1.35"/>
<circle cx="557" cy="423" r="3" fill="none" stroke="#f01010" stroke-width="1.35"/>
<circle cx="604" cy="170.5" r="3" fill="none" stroke="#18e018" stroke-width="1.35"/>
<circle cx="615.6" cy="212.7" r="3" fill="none" stroke="#18e018" stroke-width="1.35"/>
<circle cx="579.7" cy="218" r="3" fill="none" stroke="#18e018" stroke-width="1.35"/>
<circle cx="551" cy="245" r="3" fill="none" stroke="#18e018" stroke-width="1.35"/>
<circle cx="599.3" cy="247.6" r="3" fill="none" stroke="#18e018" stroke-width="1.35"/>
<circle cx="634.2" cy="251.8" r="3" fill="none" stroke="#18e018" stroke-width="1.35"/>
<circle cx="606" cy="267.6" r="3" fill="none" stroke="#18e018" stroke-width="1.35"/>
<circle cx="600.4" cy="273.6" r="3" fill="none" stroke="#18e018" stroke-width="1.35"/>
<circle cx="577.6" cy="308" r="3" fill="none" stroke="#18e018" stroke-width="1.35"/>
<circle cx="577" cy="313.9" r="3" fill="none" stroke="#18e018" stroke-width="1.35"/>
<circle cx="589.2" cy="327" r="3" fill="none" stroke="#18e018" stroke-width="1.35"/>
<circle cx="554.3" cy="367.8" r="3" fill="none" stroke="#18e018" stroke-width="1.35"/>
<circle cx="553.3" cy="377.3" r="3" fill="none" stroke="#18e018" stroke-width="1.35"/>
<circle cx="629.4" cy="372" r="3" fill="none" stroke="#18e018" stroke-width="1.35"/>
<circle cx="567" cy="396.4" r="3" fill="none" stroke="#18e018" stroke-width="1.35"/>
<circle cx="603" cy="404.4" r="3" fill="none" stroke="#18e018" stroke-width="1.35"/>
<circle cx="563.6" cy="419" r="3" fill="none" stroke="#18e018" stroke-width="1.35"/>
<circle cx="663" cy="419" r="3" fill="none" stroke="#18e018" stroke-width="1.35"/>
<circle cx="639.1" cy="179.6" r="3.1" fill="none" stroke="#e8e010" stroke-width="1.3"/>
<circle cx="639.9" cy="179.9" r="3" fill="none" stroke="#f07000" stroke-width="1.1" opacity="0.85"/>
<circle cx="639.5" cy="179.6" r="1.3" fill="#e07018" opacity="0.85"/>
<circle cx="595.6" cy="192.3" r="3.1" fill="none" stroke="#e8e010" stroke-width="1.3"/>
<circle cx="596.4" cy="192.60000000000002" r="3" fill="none" stroke="#f07000" stroke-width="1.1" opacity="0.85"/>
<circle cx="596" cy="192.3" r="1.3" fill="#e07018" opacity="0.85"/>
<circle cx="650.4" cy="193.8" r="3.1" fill="none" stroke="#e0e010" stroke-width="1.2"/>
<circle cx="649.6" cy="194.0" r="3" fill="none" stroke="#50e010" stroke-width="1.1" opacity="0.85"/>
<circle cx="650" cy="193.8" r="1.3" fill="#e07018" opacity="0.85"/>
<circle cx="634.2" cy="199.7" r="3.1" fill="none" stroke="#f0e020" stroke-width="1.35"/>
<circle cx="634.5" cy="200.0" r="2.6" fill="none" stroke="#f0a000" stroke-width="0.6" opacity="0.7"/>
<circle cx="634.2" cy="199.7" r="1.3" fill="#e07018" opacity="0.85"/>
<circle cx="559.2" cy="212.7" r="3.1" fill="none" stroke="#e8e010" stroke-width="1.3"/>
<circle cx="560.0" cy="213.0" r="3" fill="none" stroke="#f07000" stroke-width="1.1" opacity="0.85"/>
<circle cx="559.6" cy="212.7" r="1.3" fill="#e07018" opacity="0.85"/>
<circle cx="549.0" cy="222.8" r="3.1" fill="none" stroke="#e0e010" stroke-width="1.2"/>
<circle cx="548.2" cy="223.0" r="3" fill="none" stroke="#50e010" stroke-width="1.1" opacity="0.85"/>
<circle cx="548.6" cy="222.8" r="1.3" fill="#e07018" opacity="0.85"/>
<circle cx="593.4" cy="227" r="3.1" fill="none" stroke="#f0e020" stroke-width="1.35"/>
<circle cx="593.6999999999999" cy="227.3" r="2.6" fill="none" stroke="#f0a000" stroke-width="0.6" opacity="0.7"/>
<circle cx="593.4" cy="227" r="1.3" fill="#e07018" opacity="0.85"/>
<circle cx="611.6" cy="228.5" r="3.1" fill="none" stroke="#e8e010" stroke-width="1.3"/>
<circle cx="612.4" cy="228.8" r="3" fill="none" stroke="#f07000" stroke-width="1.1" opacity="0.85"/>
<circle cx="612" cy="228.5" r="1.3" fill="#e07018" opacity="0.85"/>
<circle cx="609.3" cy="235.5" r="3.1" fill="none" stroke="#f0e020" stroke-width="1.35"/>
<circle cx="609.5999999999999" cy="235.8" r="2.6" fill="none" stroke="#f0a000" stroke-width="0.6" opacity="0.7"/>
<circle cx="609.3" cy="235.5" r="1.3" fill="#e07018" opacity="0.85"/>
<circle cx="605.7" cy="245.5" r="3.1" fill="none" stroke="#f0e020" stroke-width="1.35"/>
<circle cx="606.0" cy="245.8" r="2.6" fill="none" stroke="#f0a000" stroke-width="0.6" opacity="0.7"/>
<circle cx="605.7" cy="245.5" r="1.3" fill="#e07018" opacity="0.85"/>
<circle cx="614.2" cy="246" r="3.1" fill="none" stroke="#e8e010" stroke-width="1.3"/>
<circle cx="615.0" cy="246.3" r="3" fill="none" stroke="#f07000" stroke-width="1.1" opacity="0.85"/>
<circle cx="614.6" cy="246" r="1.3" fill="#e07018" opacity="0.85"/>
<circle cx="617.1" cy="260.3" r="3.1" fill="none" stroke="#f0e020" stroke-width="1.35"/>
<circle cx="617.4" cy="260.6" r="2.6" fill="none" stroke="#f0a000" stroke-width="0.6" opacity="0.7"/>
<circle cx="617.1" cy="260.3" r="1.3" fill="#e07018" opacity="0.85"/>
<circle cx="637.8" cy="264.5" r="3.1" fill="none" stroke="#e0e010" stroke-width="1.2"/>
<circle cx="637.0" cy="264.7" r="3" fill="none" stroke="#50e010" stroke-width="1.1" opacity="0.85"/>
<circle cx="637.4" cy="264.5" r="1.3" fill="#e07018" opacity="0.85"/>
<circle cx="604.6" cy="266" r="3.1" fill="none" stroke="#e8e010" stroke-width="1.3"/>
<circle cx="605.4" cy="266.3" r="3" fill="none" stroke="#f07000" stroke-width="1.1" opacity="0.85"/>
<circle cx="605" cy="266" r="1.3" fill="#e07018" opacity="0.85"/>
<circle cx="547.4" cy="273" r="3.1" fill="none" stroke="#e0e010" stroke-width="1.2"/>
<circle cx="546.6" cy="273.2" r="3" fill="none" stroke="#50e010" stroke-width="1.1" opacity="0.85"/>
<circle cx="547" cy="273" r="1.3" fill="#e07018" opacity="0.85"/>
<circle cx="620.1" cy="282" r="3.1" fill="none" stroke="#e8e010" stroke-width="1.3"/>
<circle cx="620.9" cy="282.3" r="3" fill="none" stroke="#f07000" stroke-width="1.1" opacity="0.85"/>
<circle cx="620.5" cy="282" r="1.3" fill="#e07018" opacity="0.85"/>
<circle cx="591.3" cy="285.2" r="3.1" fill="none" stroke="#f0e020" stroke-width="1.35"/>
<circle cx="591.5999999999999" cy="285.5" r="2.6" fill="none" stroke="#f0a000" stroke-width="0.6" opacity="0.7"/>
<circle cx="591.3" cy="285.2" r="1.3" fill="#e07018" opacity="0.85"/>
<circle cx="602.3" cy="291" r="3.1" fill="none" stroke="#f0e020" stroke-width="1.35"/>
<circle cx="602.5999999999999" cy="291.3" r="2.6" fill="none" stroke="#f0a000" stroke-width="0.6" opacity="0.7"/>
<circle cx="602.3" cy="291" r="1.3" fill="#e07018" opacity="0.85"/>
<circle cx="590.3" cy="300" r="3.1" fill="none" stroke="#f0e020" stroke-width="1.35"/>
<circle cx="590.5999999999999" cy="300.3" r="2.6" fill="none" stroke="#f0a000" stroke-width="0.6" opacity="0.7"/>
<circle cx="590.3" cy="300" r="1.3" fill="#e07018" opacity="0.85"/>
<circle cx="641.4" cy="322.8" r="3.1" fill="none" stroke="#e0e010" stroke-width="1.2"/>
<circle cx="640.6" cy="323.0" r="3" fill="none" stroke="#50e010" stroke-width="1.1" opacity="0.85"/>
<circle cx="641" cy="322.8" r="1.3" fill="#e07018" opacity="0.85"/>
<circle cx="573.6" cy="331.2" r="3.1" fill="none" stroke="#e8e010" stroke-width="1.3"/>
<circle cx="574.4" cy="331.5" r="3" fill="none" stroke="#f07000" stroke-width="1.1" opacity="0.85"/>
<circle cx="574" cy="331.2" r="1.3" fill="#e07018" opacity="0.85"/>
<circle cx="623" cy="331.2" r="3.1" fill="none" stroke="#f0e020" stroke-width="1.35"/>
<circle cx="623.3" cy="331.5" r="2.6" fill="none" stroke="#f0a000" stroke-width="0.6" opacity="0.7"/>
<circle cx="623" cy="331.2" r="1.3" fill="#e07018" opacity="0.85"/>
<circle cx="615.2" cy="339.3" r="3.1" fill="none" stroke="#f0e020" stroke-width="1.35"/>
<circle cx="615.5" cy="339.6" r="2.6" fill="none" stroke="#f0a000" stroke-width="0.6" opacity="0.7"/>
<circle cx="615.2" cy="339.3" r="1.3" fill="#e07018" opacity="0.85"/>
<circle cx="650.6" cy="343.3" r="3.1" fill="none" stroke="#e8e010" stroke-width="1.3"/>
<circle cx="651.4" cy="343.6" r="3" fill="none" stroke="#f07000" stroke-width="1.1" opacity="0.85"/>
<circle cx="651" cy="343.3" r="1.3" fill="#e07018" opacity="0.85"/>
<circle cx="604.6" cy="354" r="3.1" fill="none" stroke="#f0e020" stroke-width="1.35"/>
<circle cx="604.9" cy="354.3" r="2.6" fill="none" stroke="#f0a000" stroke-width="0.6" opacity="0.7"/>
<circle cx="604.6" cy="354" r="1.3" fill="#e07018" opacity="0.85"/>
<circle cx="609.6" cy="356" r="3.1" fill="none" stroke="#e8e010" stroke-width="1.3"/>
<circle cx="610.4" cy="356.3" r="3" fill="none" stroke="#f07000" stroke-width="1.1" opacity="0.85"/>
<circle cx="610" cy="356" r="1.3" fill="#e07018" opacity="0.85"/>
<circle cx="580.3000000000001" cy="370" r="3.1" fill="none" stroke="#e8e010" stroke-width="1.3"/>
<circle cx="581.1" cy="370.3" r="3" fill="none" stroke="#f07000" stroke-width="1.1" opacity="0.85"/>
<circle cx="580.7" cy="370" r="1.3" fill="#e07018" opacity="0.85"/>
<circle cx="601.5" cy="383" r="3.1" fill="none" stroke="#e8e010" stroke-width="1.3"/>
<circle cx="602.3" cy="383.3" r="3" fill="none" stroke="#f07000" stroke-width="1.1" opacity="0.85"/>
<circle cx="601.9" cy="383" r="1.3" fill="#e07018" opacity="0.85"/>
<text transform="translate(633.60 177.30) scale(0.87 1)" text-anchor="middle" font-family="Liberation Sans" font-size="10.2" fill="#e4e8f0" stroke="#e4e8f0" stroke-width="0.15">24</text>
<text transform="translate(591.00 190.00) scale(0.87 1)" text-anchor="middle" font-family="Liberation Sans" font-size="10.2" fill="#e4e8f0" stroke="#e4e8f0" stroke-width="0.15">12</text>
<text transform="translate(645.00 191.60) scale(0.87 1)" text-anchor="middle" font-family="Liberation Sans" font-size="10.2" fill="#e4e8f0" stroke="#e4e8f0" stroke-width="0.15">25</text>
<text transform="translate(629.40 197.40) scale(0.87 1)" text-anchor="middle" font-family="Liberation Sans" font-size="10.2" fill="#e4e8f0" stroke="#e4e8f0" stroke-width="0.15">23</text>
<text transform="translate(555.00 210.40) scale(0.87 1)" text-anchor="middle" font-family="Liberation Sans" font-size="10.2" fill="#e4e8f0" stroke="#e4e8f0" stroke-width="0.15">17</text>
<text transform="translate(543.00 220.60) scale(0.87 1)" text-anchor="middle" font-family="Liberation Sans" font-size="10.2" fill="#e4e8f0" stroke="#e4e8f0" stroke-width="0.15">15</text>
<text transform="translate(591.00 224.30) scale(0.87 1)" text-anchor="middle" font-family="Liberation Sans" font-size="10.2" fill="#e4e8f0" stroke="#e4e8f0" stroke-width="0.15">5</text>
<text transform="translate(608.60 225.60) scale(0.87 1)" text-anchor="middle" font-family="Liberation Sans" font-size="10.2" fill="#e4e8f0" stroke="#e4e8f0" stroke-width="0.15">7</text>
<text transform="translate(606.50 232.60) scale(0.87 1)" text-anchor="middle" font-family="Liberation Sans" font-size="10.2" fill="#e4e8f0" stroke="#e4e8f0" stroke-width="0.15">9</text>
<text transform="translate(603.00 243.10) scale(0.87 1)" text-anchor="middle" font-family="Liberation Sans" font-size="10.2" fill="#e4e8f0" stroke="#e4e8f0" stroke-width="0.15">6</text>
<text transform="translate(611.50 243.60) scale(0.87 1)" text-anchor="middle" font-family="Liberation Sans" font-size="10.2" fill="#e4e8f0" stroke="#e4e8f0" stroke-width="0.15">13</text>
<text transform="translate(612.50 257.60) scale(0.87 1)" text-anchor="middle" font-family="Liberation Sans" font-size="10.2" fill="#e4e8f0" stroke="#e4e8f0" stroke-width="0.15">11</text>
<text transform="translate(631.50 261.60) scale(0.87 1)" text-anchor="middle" font-family="Liberation Sans" font-size="10.2" fill="#e4e8f0" stroke="#e4e8f0" stroke-width="0.15">21</text>
<text transform="translate(599.80 263.90) scale(0.87 1)" text-anchor="middle" font-family="Liberation Sans" font-size="10.2" fill="#e4e8f0" stroke="#e4e8f0" stroke-width="0.15">27</text>
<text transform="translate(543.70 270.80) scale(0.87 1)" text-anchor="middle" font-family="Liberation Sans" font-size="10.2" fill="#e4e8f0" stroke="#e4e8f0" stroke-width="0.15">8</text>
<text transform="translate(615.60 279.60) scale(0.87 1)" text-anchor="middle" font-family="Liberation Sans" font-size="10.2" fill="#e4e8f0" stroke="#e4e8f0" stroke-width="0.15">10</text>
<text transform="translate(588.80 282.90) scale(0.87 1)" text-anchor="middle" font-family="Liberation Sans" font-size="10.2" fill="#e4e8f0" stroke="#e4e8f0" stroke-width="0.15">1</text>
<text transform="translate(599.80 288.20) scale(0.87 1)" text-anchor="middle" font-family="Liberation Sans" font-size="10.2" fill="#e4e8f0" stroke="#e4e8f0" stroke-width="0.15">3</text>
<text transform="translate(587.00 298.10) scale(0.87 1)" text-anchor="middle" font-family="Liberation Sans" font-size="10.2" fill="#e4e8f0" stroke="#e4e8f0" stroke-width="0.15">2</text>
<text transform="translate(635.70 320.00) scale(0.87 1)" text-anchor="middle" font-family="Liberation Sans" font-size="10.2" fill="#e4e8f0" stroke="#e4e8f0" stroke-width="0.15">26</text>
<text transform="translate(570.60 328.50) scale(0.87 1)" text-anchor="middle" font-family="Liberation Sans" font-size="10.2" fill="#e4e8f0" stroke="#e4e8f0" stroke-width="0.15">4</text>
<text transform="translate(617.70 328.50) scale(0.87 1)" text-anchor="middle" font-family="Liberation Sans" font-size="10.2" fill="#e4e8f0" stroke="#e4e8f0" stroke-width="0.15">20</text>
<text transform="translate(610.00 336.90) scale(0.87 1)" text-anchor="middle" font-family="Liberation Sans" font-size="10.2" fill="#e4e8f0" stroke="#e4e8f0" stroke-width="0.15">14</text>
<text transform="translate(645.90 341.20) scale(0.87 1)" text-anchor="middle" font-family="Liberation Sans" font-size="10.2" fill="#e4e8f0" stroke="#e4e8f0" stroke-width="0.15">28</text>
<text transform="translate(599.80 351.60) scale(0.87 1)" text-anchor="middle" font-family="Liberation Sans" font-size="10.2" fill="#e4e8f0" stroke="#e4e8f0" stroke-width="0.15">16</text>
<text transform="translate(607.00 352.80) scale(0.87 1)" text-anchor="middle" font-family="Liberation Sans" font-size="10.2" fill="#e4e8f0" stroke="#e4e8f0" stroke-width="0.15">19</text>
<text transform="translate(577.00 367.60) scale(0.87 1)" text-anchor="middle" font-family="Liberation Sans" font-size="10.2" fill="#e4e8f0" stroke="#e4e8f0" stroke-width="0.15">18</text>
<text transform="translate(596.60 380.60) scale(0.87 1)" text-anchor="middle" font-family="Liberation Sans" font-size="10.2" fill="#e4e8f0" stroke="#e4e8f0" stroke-width="0.15">22</text>
<path d="M537.2 113.6 H678.5 V430.3 H537.2 Z" fill="none" stroke="#d4d4d4" stroke-width="1"/>
<path d="M537 390.5 h3 M678.5 390.5 h-3" stroke="#d4d4d4" stroke-width="1"/>
<text transform="translate(533.60 393.89) scale(0.83 1)" text-anchor="end" font-family="Liberation Sans" font-size="10.8" fill="#fff">50</text>
<path d="M537 351.2 h3 M678.5 351.2 h-3" stroke="#d4d4d4" stroke-width="1"/>
<text transform="translate(533.60 354.61) scale(0.83 1)" text-anchor="end" font-family="Liberation Sans" font-size="10.8" fill="#fff">100</text>
<path d="M537 311.9 h3 M678.5 311.9 h-3" stroke="#d4d4d4" stroke-width="1"/>
<text transform="translate(533.60 315.32) scale(0.83 1)" text-anchor="end" font-family="Liberation Sans" font-size="10.8" fill="#fff">150</text>
<path d="M537 272.6 h3 M678.5 272.6 h-3" stroke="#d4d4d4" stroke-width="1"/>
<text transform="translate(533.60 276.04) scale(0.83 1)" text-anchor="end" font-family="Liberation Sans" font-size="10.8" fill="#fff">200</text>
<path d="M537 233.4 h3 M678.5 233.4 h-3" stroke="#d4d4d4" stroke-width="1"/>
<text transform="translate(533.60 236.75) scale(0.83 1)" text-anchor="end" font-family="Liberation Sans" font-size="10.8" fill="#fff">250</text>
<path d="M537 194.1 h3 M678.5 194.1 h-3" stroke="#d4d4d4" stroke-width="1"/>
<text transform="translate(533.60 197.47) scale(0.83 1)" text-anchor="end" font-family="Liberation Sans" font-size="10.8" fill="#fff">300</text>
<path d="M537 154.8 h3 M678.5 154.8 h-3" stroke="#d4d4d4" stroke-width="1"/>
<text transform="translate(533.60 158.19) scale(0.83 1)" text-anchor="end" font-family="Liberation Sans" font-size="10.8" fill="#fff">350</text>
<path d="M537 115.5 h3 M678.5 115.5 h-3" stroke="#d4d4d4" stroke-width="1"/>
<text transform="translate(533.60 118.90) scale(0.83 1)" text-anchor="end" font-family="Liberation Sans" font-size="10.8" fill="#fff">400</text>
<path d="M575.6 430.3 v-3 M575.6 113.6 v3" stroke="#d4d4d4" stroke-width="1"/>
<text transform="translate(575.60 441.80) scale(0.83 1)" text-anchor="middle" font-family="Liberation Sans" font-size="10.8" fill="#fff">50</text>
<path d="M615.0 430.3 v-3 M615.0 113.6 v3" stroke="#d4d4d4" stroke-width="1"/>
<text transform="translate(615.00 441.80) scale(0.83 1)" text-anchor="middle" font-family="Liberation Sans" font-size="10.8" fill="#fff">100</text>
<path d="M654.4 430.3 v-3 M654.4 113.6 v3" stroke="#d4d4d4" stroke-width="1"/>
<text transform="translate(654.40 441.80) scale(0.83 1)" text-anchor="middle" font-family="Liberation Sans" font-size="10.8" fill="#fff">150</text></svg>
<div class="t" style="top:455.32px;font-size:7.6px;color:#222;left:487.90px;width:300px;text-align:right;">Memory usage: 49%</div>
<div class="a" style="left:219px;top:42px;width:107px;height:36px;background:rgba(0,0,0,0.10);filter:blur(1.2px)"></div>
<div class="a" style="left:217px;top:40px;width:107px;height:36px;border:1px solid #a8a8a8;background:#f0f0f0"></div>
<div class="a" style="left:238px;top:41px;width:1px;height:34px;background:#e2e3e3"></div>
<div class="a" style="left:239px;top:41px;width:1px;height:34px;background:#fff"></div>
<div class="a" style="left:219px;top:42px;width:104px;height:16px;border:1px solid #aeccef;border-radius:3px;background:linear-gradient(#f4f8fd,#e3edf9)"></div>
<div class="t m" style="top:46.34px;font-size:8.7px;color:#1a1a1a;left:240.30px;">Memory</div>
<div class="t m" style="top:62.14px;font-size:8.7px;color:#1a1a1a;left:240.30px;">Parallel computing</div>
<svg style="left:320.5px;top:47px" width="4" height="25"><path d="M0 0 L3.5 3.5 L0 7 Z M0 16 L3.5 19.5 L0 23 Z" fill="#222"/></svg>
<div class="a" style="left:324px;top:42px;width:219px;height:70px;background:rgba(0,0,0,0.10);filter:blur(1.2px)"></div>
<div class="a" style="left:322px;top:40px;width:218px;height:70px;border:1px solid #a8a8a8;background:#f0f0f0"></div>
<div class="a" style="left:343px;top:41px;width:1px;height:68px;background:#e2e3e3"></div>
<div class="a" style="left:344px;top:41px;width:1px;height:68px;background:#fff"></div>
<div class="a" style="left:345px;top:58px;width:193px;height:1px;background:#e0e0e0"></div>
<div class="a" style="left:345px;top:59px;width:193px;height:1px;background:#fff"></div>
<div class="a" style="left:325px;top:75px;width:213px;height:17.5px;border:1px solid #aeccef;border-radius:3px;background:linear-gradient(#f4f8fd,#e3edf9)"></div>
<div class="t m" style="top:46.92px;font-size:8.6px;color:#1a1a1a;left:347.30px;">Memory profile</div>
<div class="t m" style="top:64.60px;font-size:8.5px;color:#1a1a1a;left:347.00px;">Clear raw image data from RAM</div>
<div class="t m" style="top:79.55px;font-size:8.5px;color:#1a1a1a;left:347.00px;">Reload raw image data into RAM</div>
<div class="t m" style="top:96.59px;font-size:8.75px;color:#1a1a1a;left:347.00px;">Open documentation on memory management</div>
<svg style="left:0;top:0" width="800" height="473" viewBox="0 0 800 473">
 <ellipse cx="22.8" cy="185" rx="21.3" ry="36" transform="rotate(-7 22.8 185)" fill="none" stroke="#ee1111" stroke-width="1.7"/>
 <ellipse cx="435.8" cy="83.2" rx="115" ry="16.6" transform="rotate(0.25 435.8 83.2)" fill="none" stroke="#ee1111" stroke-width="1.7"/>
</svg>
</body></html>
